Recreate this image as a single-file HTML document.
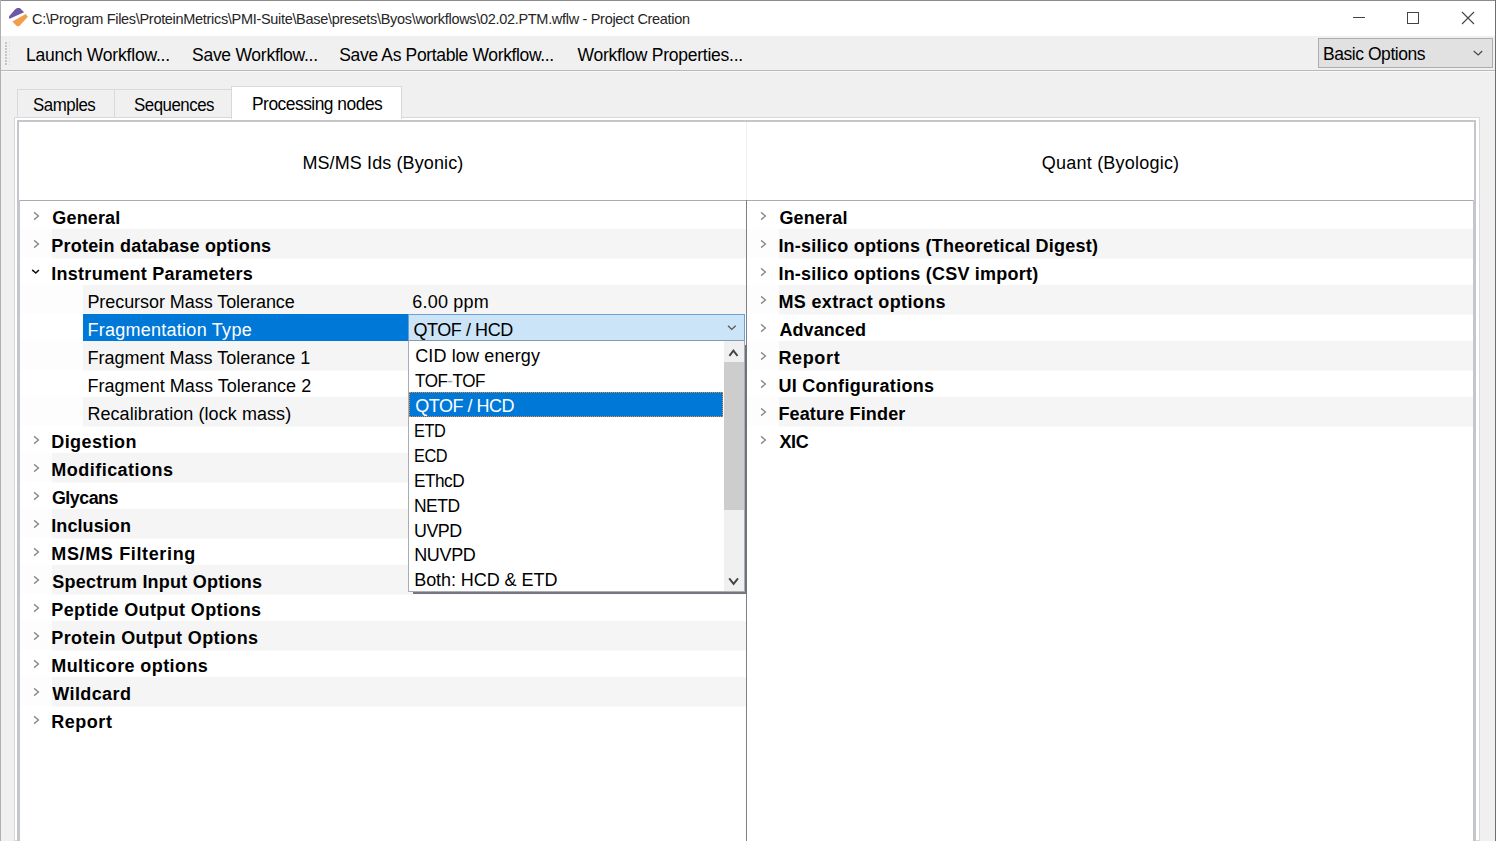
<!DOCTYPE html><html><head><meta charset="utf-8"><style>
html,body{margin:0;padding:0;}
body{width:1496px;height:841px;overflow:hidden;position:relative;background:#f0f0f0;font-family:"Liberation Sans", sans-serif;}
.a{position:absolute;}
.t{position:absolute;white-space:pre;line-height:1;}
</style></head><body>

<div class="a" style="left:0px;top:0px;width:1496px;height:1px;background:#8c8c8c"></div>
<div class="a" style="left:0px;top:0px;width:1px;height:841px;background:#b0b0b0"></div>
<div class="a" style="left:1495px;top:0px;width:1px;height:841px;background:#6e6e6e"></div>
<div class="a" style="left:1px;top:1px;width:1494px;height:35px;background:#fff"></div>
<svg class="a" style="left:0;top:0" width="36" height="36" viewBox="0 0 36 36">
<path d="M9.6 18.7 Q8.3 17.9 9.3 15.9 L15 9.6 Q16.2 8 17.6 8 L19.8 8 L24.1 12.3 Z" fill="#6f57a2"/>
<path d="M12.3 21.4 L25.7 13.9 L27.9 16.7 L19.4 26 Q18 26.8 16.4 25.8 Z" fill="#f0a04c"/>
</svg>
<div class="a" style="left:1353px;top:17px;width:12px;height:1px;background:#444"></div>
<div class="a" style="left:1407px;top:12px;width:10px;height:10px;border:1px solid #444"></div>
<svg class="a" style="left:1460px;top:10px" width="16" height="16" viewBox="0 0 16 16">
<path d="M2 2 L14 14 M14 2 L2 14" stroke="#444" stroke-width="1.1"/></svg>
<div class="a" style="left:1px;top:36px;width:1494px;height:34px;background:#f0f0f0"></div>
<div class="a" style="left:1px;top:70px;width:1494px;height:1px;background:#b9b9b9"></div>
<div class="a" style="left:1px;top:71px;width:1494px;height:1px;background:#f8f8f8"></div>
<div class="a" style="left:5px;top:41.5px;width:2px;height:2px;background:#c6c6c6"></div><div class="a" style="left:9px;top:42.0px;width:1px;height:1px;background:#d6d6d6"></div><div class="a" style="left:5px;top:44.6px;width:2px;height:2px;background:#c6c6c6"></div><div class="a" style="left:9px;top:45.1px;width:1px;height:1px;background:#d6d6d6"></div><div class="a" style="left:5px;top:47.7px;width:2px;height:2px;background:#c6c6c6"></div><div class="a" style="left:9px;top:48.2px;width:1px;height:1px;background:#d6d6d6"></div><div class="a" style="left:5px;top:50.8px;width:2px;height:2px;background:#c6c6c6"></div><div class="a" style="left:9px;top:51.3px;width:1px;height:1px;background:#d6d6d6"></div><div class="a" style="left:5px;top:53.9px;width:2px;height:2px;background:#c6c6c6"></div><div class="a" style="left:9px;top:54.4px;width:1px;height:1px;background:#d6d6d6"></div><div class="a" style="left:5px;top:57.0px;width:2px;height:2px;background:#c6c6c6"></div><div class="a" style="left:9px;top:57.5px;width:1px;height:1px;background:#d6d6d6"></div><div class="a" style="left:5px;top:60.1px;width:2px;height:2px;background:#c6c6c6"></div><div class="a" style="left:9px;top:60.6px;width:1px;height:1px;background:#d6d6d6"></div><div class="a" style="left:5px;top:63.2px;width:2px;height:2px;background:#c6c6c6"></div><div class="a" style="left:9px;top:63.7px;width:1px;height:1px;background:#d6d6d6"></div>
<div class="a" style="left:1318px;top:38px;width:173px;height:28px;background:#e1e1e1;border:1px solid #adadad"></div>
<svg class="a" style="left:1470px;top:47px" width="16" height="12" viewBox="0 0 16 12">
<path d="M3.7 4 L8.2 8 L12.2 4" stroke="#444" stroke-width="1.1" fill="none"/></svg>
<div class="a" style="left:17px;top:89px;width:98px;height:29px;background:#f0f0f0;border:1px solid #d9d9d9;border-bottom:none;box-sizing:border-box"></div>
<div class="a" style="left:115px;top:89px;width:117px;height:29px;background:#f0f0f0;border:1px solid #d9d9d9;border-left:none;border-bottom:none;box-sizing:border-box"></div>
<div class="a" style="left:14px;top:117px;width:1466px;height:724px;background:#fff;border:1px solid #d9d9d9;box-sizing:border-box"></div>
<div class="a" style="left:231px;top:86px;width:171px;height:33px;background:#fff;border:1px solid #d9d9d9;border-bottom:none;box-sizing:border-box"></div>
<div class="a" style="left:17px;top:120px;width:1459px;height:721px;background:#fff;border-left:2px solid #c3c7cc;border-top:2px solid #c3c7cc;border-right:2px solid #c3c7cc;box-sizing:border-box"></div>
<div class="a" style="left:746px;top:122px;width:1px;height:78px;background:#f0f0f0"></div>
<div class="a" style="left:19px;top:200px;width:1455px;height:1px;background:#a8acb2"></div>
<div class="a" style="left:18px;top:200px;width:2px;height:641px;background:#c3c7cc"></div>
<div class="a" style="left:746px;top:200px;width:1px;height:641px;background:#7d828a"></div>
<div class="a" style="left:1473px;top:200px;width:2px;height:641px;background:#c3c7cc"></div>
<div class="a" style="left:20px;top:229px;width:32px;height:29px;background:#fdfdfd"></div>
<div class="a" style="left:52px;top:229px;width:694px;height:29px;background:#f5f5f5"></div>
<div class="a" style="left:52px;top:258px;width:694px;height:1px;background:#fafafa"></div>
<div class="a" style="left:20px;top:285px;width:63px;height:29px;background:#fdfdfd"></div>
<div class="a" style="left:83px;top:285px;width:663px;height:29px;background:#f5f5f5"></div>
<div class="a" style="left:83px;top:314px;width:663px;height:1px;background:#fafafa"></div>
<div class="a" style="left:83px;top:314px;width:326px;height:28px;background:#0078d7"></div>
<div class="a" style="left:20px;top:341px;width:63px;height:29px;background:#fdfdfd"></div>
<div class="a" style="left:83px;top:341px;width:663px;height:29px;background:#f5f5f5"></div>
<div class="a" style="left:83px;top:370px;width:663px;height:1px;background:#fafafa"></div>
<div class="a" style="left:20px;top:397px;width:63px;height:29px;background:#fdfdfd"></div>
<div class="a" style="left:83px;top:397px;width:663px;height:29px;background:#f5f5f5"></div>
<div class="a" style="left:83px;top:426px;width:663px;height:1px;background:#fafafa"></div>
<div class="a" style="left:20px;top:453px;width:32px;height:29px;background:#fdfdfd"></div>
<div class="a" style="left:52px;top:453px;width:694px;height:29px;background:#f5f5f5"></div>
<div class="a" style="left:52px;top:482px;width:694px;height:1px;background:#fafafa"></div>
<div class="a" style="left:20px;top:509px;width:32px;height:29px;background:#fdfdfd"></div>
<div class="a" style="left:52px;top:509px;width:694px;height:29px;background:#f5f5f5"></div>
<div class="a" style="left:52px;top:538px;width:694px;height:1px;background:#fafafa"></div>
<div class="a" style="left:20px;top:565px;width:32px;height:29px;background:#fdfdfd"></div>
<div class="a" style="left:52px;top:565px;width:694px;height:29px;background:#f5f5f5"></div>
<div class="a" style="left:52px;top:594px;width:694px;height:1px;background:#fafafa"></div>
<div class="a" style="left:20px;top:621px;width:32px;height:29px;background:#fdfdfd"></div>
<div class="a" style="left:52px;top:621px;width:694px;height:29px;background:#f5f5f5"></div>
<div class="a" style="left:52px;top:650px;width:694px;height:1px;background:#fafafa"></div>
<div class="a" style="left:20px;top:677px;width:32px;height:29px;background:#fdfdfd"></div>
<div class="a" style="left:52px;top:677px;width:694px;height:29px;background:#f5f5f5"></div>
<div class="a" style="left:52px;top:706px;width:694px;height:1px;background:#fafafa"></div>
<div class="a" style="left:747px;top:229px;width:32px;height:29px;background:#fdfdfd"></div>
<div class="a" style="left:779px;top:229px;width:694px;height:29px;background:#f5f5f5"></div>
<div class="a" style="left:779px;top:258px;width:694px;height:1px;background:#fafafa"></div>
<div class="a" style="left:747px;top:285px;width:32px;height:29px;background:#fdfdfd"></div>
<div class="a" style="left:779px;top:285px;width:694px;height:29px;background:#f5f5f5"></div>
<div class="a" style="left:779px;top:314px;width:694px;height:1px;background:#fafafa"></div>
<div class="a" style="left:747px;top:341px;width:32px;height:29px;background:#fdfdfd"></div>
<div class="a" style="left:779px;top:341px;width:694px;height:29px;background:#f5f5f5"></div>
<div class="a" style="left:779px;top:370px;width:694px;height:1px;background:#fafafa"></div>
<div class="a" style="left:747px;top:397px;width:32px;height:29px;background:#fdfdfd"></div>
<div class="a" style="left:779px;top:397px;width:694px;height:29px;background:#f5f5f5"></div>
<div class="a" style="left:779px;top:426px;width:694px;height:1px;background:#fafafa"></div>
<svg class="a" style="left:30px;top:208px" width="16" height="16" viewBox="0 0 16 16"><path d="M4.1 4.4 L8.4 8 L4.1 11.6" stroke="#8a8a8a" stroke-width="1.4" fill="none"/></svg>
<svg class="a" style="left:30px;top:236px" width="16" height="16" viewBox="0 0 16 16"><path d="M4.1 4.4 L8.4 8 L4.1 11.6" stroke="#8a8a8a" stroke-width="1.4" fill="none"/></svg>
<svg class="a" style="left:28px;top:263px" width="16" height="16" viewBox="0 0 16 16"><path d="M4.2 6.9 L7.8 10 L10.9 7" stroke="#111" stroke-width="1.6" fill="none"/></svg>
<svg class="a" style="left:30px;top:432px" width="16" height="16" viewBox="0 0 16 16"><path d="M4.1 4.4 L8.4 8 L4.1 11.6" stroke="#8a8a8a" stroke-width="1.4" fill="none"/></svg>
<svg class="a" style="left:30px;top:460px" width="16" height="16" viewBox="0 0 16 16"><path d="M4.1 4.4 L8.4 8 L4.1 11.6" stroke="#8a8a8a" stroke-width="1.4" fill="none"/></svg>
<svg class="a" style="left:30px;top:488px" width="16" height="16" viewBox="0 0 16 16"><path d="M4.1 4.4 L8.4 8 L4.1 11.6" stroke="#8a8a8a" stroke-width="1.4" fill="none"/></svg>
<svg class="a" style="left:30px;top:516px" width="16" height="16" viewBox="0 0 16 16"><path d="M4.1 4.4 L8.4 8 L4.1 11.6" stroke="#8a8a8a" stroke-width="1.4" fill="none"/></svg>
<svg class="a" style="left:30px;top:544px" width="16" height="16" viewBox="0 0 16 16"><path d="M4.1 4.4 L8.4 8 L4.1 11.6" stroke="#8a8a8a" stroke-width="1.4" fill="none"/></svg>
<svg class="a" style="left:30px;top:572px" width="16" height="16" viewBox="0 0 16 16"><path d="M4.1 4.4 L8.4 8 L4.1 11.6" stroke="#8a8a8a" stroke-width="1.4" fill="none"/></svg>
<svg class="a" style="left:30px;top:600px" width="16" height="16" viewBox="0 0 16 16"><path d="M4.1 4.4 L8.4 8 L4.1 11.6" stroke="#8a8a8a" stroke-width="1.4" fill="none"/></svg>
<svg class="a" style="left:30px;top:628px" width="16" height="16" viewBox="0 0 16 16"><path d="M4.1 4.4 L8.4 8 L4.1 11.6" stroke="#8a8a8a" stroke-width="1.4" fill="none"/></svg>
<svg class="a" style="left:30px;top:656px" width="16" height="16" viewBox="0 0 16 16"><path d="M4.1 4.4 L8.4 8 L4.1 11.6" stroke="#8a8a8a" stroke-width="1.4" fill="none"/></svg>
<svg class="a" style="left:30px;top:684px" width="16" height="16" viewBox="0 0 16 16"><path d="M4.1 4.4 L8.4 8 L4.1 11.6" stroke="#8a8a8a" stroke-width="1.4" fill="none"/></svg>
<svg class="a" style="left:30px;top:712px" width="16" height="16" viewBox="0 0 16 16"><path d="M4.1 4.4 L8.4 8 L4.1 11.6" stroke="#8a8a8a" stroke-width="1.4" fill="none"/></svg>
<svg class="a" style="left:757px;top:208px" width="16" height="16" viewBox="0 0 16 16"><path d="M4.1 4.4 L8.4 8 L4.1 11.6" stroke="#8a8a8a" stroke-width="1.4" fill="none"/></svg>
<svg class="a" style="left:757px;top:236px" width="16" height="16" viewBox="0 0 16 16"><path d="M4.1 4.4 L8.4 8 L4.1 11.6" stroke="#8a8a8a" stroke-width="1.4" fill="none"/></svg>
<svg class="a" style="left:757px;top:264px" width="16" height="16" viewBox="0 0 16 16"><path d="M4.1 4.4 L8.4 8 L4.1 11.6" stroke="#8a8a8a" stroke-width="1.4" fill="none"/></svg>
<svg class="a" style="left:757px;top:292px" width="16" height="16" viewBox="0 0 16 16"><path d="M4.1 4.4 L8.4 8 L4.1 11.6" stroke="#8a8a8a" stroke-width="1.4" fill="none"/></svg>
<svg class="a" style="left:757px;top:320px" width="16" height="16" viewBox="0 0 16 16"><path d="M4.1 4.4 L8.4 8 L4.1 11.6" stroke="#8a8a8a" stroke-width="1.4" fill="none"/></svg>
<svg class="a" style="left:757px;top:348px" width="16" height="16" viewBox="0 0 16 16"><path d="M4.1 4.4 L8.4 8 L4.1 11.6" stroke="#8a8a8a" stroke-width="1.4" fill="none"/></svg>
<svg class="a" style="left:757px;top:376px" width="16" height="16" viewBox="0 0 16 16"><path d="M4.1 4.4 L8.4 8 L4.1 11.6" stroke="#8a8a8a" stroke-width="1.4" fill="none"/></svg>
<svg class="a" style="left:757px;top:404px" width="16" height="16" viewBox="0 0 16 16"><path d="M4.1 4.4 L8.4 8 L4.1 11.6" stroke="#8a8a8a" stroke-width="1.4" fill="none"/></svg>
<svg class="a" style="left:757px;top:432px" width="16" height="16" viewBox="0 0 16 16"><path d="M4.1 4.4 L8.4 8 L4.1 11.6" stroke="#8a8a8a" stroke-width="1.4" fill="none"/></svg>
<div class="a" style="left:408px;top:314px;width:337px;height:27px;background:#cce4f7;border:1px solid #6d9fd1;border-bottom-color:#8d99a6;box-sizing:border-box"></div>
<svg class="a" style="left:724px;top:319px" width="16" height="16" viewBox="0 0 16 16">
<path d="M4 6.7 L7.7 10.4 L11.7 6.7" stroke="#555" stroke-width="1.3" fill="none"/></svg>
<div class="a" style="left:408px;top:341px;width:337px;height:251px;background:#fff;border-left:1px solid #a9adb3;border-right:1px solid #a9adb3;border-bottom:1px solid #a9adb3;box-sizing:border-box"></div>
<div class="a" style="left:745px;top:345px;width:2px;height:249px;background:#6f737a"></div>
<div class="a" style="left:413px;top:592px;width:334px;height:2px;background:#74787e"></div>
<div class="a" style="left:409px;top:392px;width:314px;height:25px;background:#0078d7;outline:1px dotted #f08a2a;outline-offset:-1px"></div>
<div class="a" style="left:724px;top:341px;width:20px;height:250px;background:#f0f0f0"></div>
<div class="a" style="left:724px;top:362px;width:20px;height:148px;background:#cdcdcd"></div>
<svg class="a" style="left:725px;top:344px" width="16" height="16" viewBox="0 0 16 16">
<path d="M4.4 11.8 L8.4 6.6 L12.5 11.8" stroke="#444" stroke-width="1.9" fill="none"/></svg>
<svg class="a" style="left:725px;top:573px" width="16" height="16" viewBox="0 0 16 16">
<path d="M4.2 5.4 L8.6 10.9 L13 5.4" stroke="#444" stroke-width="1.9" fill="none"/></svg>
<div class="t" style="left:32.00px;top:11.93px;font-size:14.5px;font-weight:400;color:#262626;letter-spacing:-0.311px">C:\Program Files\ProteinMetrics\PMI-Suite\Base\presets\Byos\workflows\02.02.PTM.wflw - Project Creation</div>
<div class="t" style="left:26.00px;top:47.49px;font-size:17.5px;font-weight:400;color:#000;letter-spacing:-0.204px">Launch Workflow...</div>
<div class="t" style="left:192.00px;top:47.49px;font-size:17.5px;font-weight:400;color:#000;letter-spacing:-0.263px">Save Workflow...</div>
<div class="t" style="left:339.30px;top:47.49px;font-size:17.5px;font-weight:400;color:#000;letter-spacing:-0.351px">Save As Portable Workflow...</div>
<div class="t" style="left:577.60px;top:47.49px;font-size:17.5px;font-weight:400;color:#000;letter-spacing:-0.251px">Workflow Properties...</div>
<div class="t" style="left:1323.00px;top:46.19px;font-size:17.5px;font-weight:400;color:#000;letter-spacing:-0.451px">Basic Options</div>
<div class="t" style="left:33.20px;top:96.99px;font-size:17.5px;font-weight:400;color:#000;letter-spacing:-0.500px;transform:scaleX(0.9642);transform-origin:0 0">Samples</div>
<div class="t" style="left:134.30px;top:96.99px;font-size:17.5px;font-weight:400;color:#000;letter-spacing:-0.500px;transform:scaleX(0.9628);transform-origin:0 0">Sequences</div>
<div class="t" style="left:252.20px;top:95.59px;font-size:17.5px;font-weight:400;color:#000;letter-spacing:-0.500px;transform:scaleX(0.9934);transform-origin:0 0">Processing nodes</div>
<div class="t" style="left:302.40px;top:154.16px;font-size:18px;font-weight:400;color:#000;letter-spacing:0.110px">MS/MS Ids (Byonic)</div>
<div class="t" style="left:1041.80px;top:154.06px;font-size:18px;font-weight:400;color:#000;letter-spacing:0.216px">Quant (Byologic)</div>
<div class="t" style="left:52.30px;top:208.96px;font-size:18px;font-weight:700;color:#000;letter-spacing:0.161px">General</div>
<div class="t" style="left:51.30px;top:236.96px;font-size:18px;font-weight:700;color:#000;letter-spacing:0.208px">Protein database options</div>
<div class="t" style="left:51.30px;top:264.96px;font-size:18px;font-weight:700;color:#000;letter-spacing:0.267px">Instrument Parameters</div>
<div class="t" style="left:87.40px;top:292.96px;font-size:18px;font-weight:400;color:#000;letter-spacing:-0.059px">Precursor Mass Tolerance</div>
<div class="t" style="left:87.40px;top:320.96px;font-size:18px;font-weight:400;color:#fff;letter-spacing:0.266px">Fragmentation Type</div>
<div class="t" style="left:87.40px;top:348.96px;font-size:18px;font-weight:400;color:#000;letter-spacing:0.009px">Fragment Mass Tolerance 1</div>
<div class="t" style="left:87.40px;top:376.96px;font-size:18px;font-weight:400;color:#000;letter-spacing:0.042px">Fragment Mass Tolerance 2</div>
<div class="t" style="left:87.40px;top:404.96px;font-size:18px;font-weight:400;color:#000;letter-spacing:0.072px">Recalibration (lock mass)</div>
<div class="t" style="left:51.30px;top:432.96px;font-size:18px;font-weight:700;color:#000;letter-spacing:0.399px">Digestion</div>
<div class="t" style="left:51.30px;top:460.96px;font-size:18px;font-weight:700;color:#000;letter-spacing:0.476px">Modifications</div>
<div class="t" style="left:52.30px;top:488.96px;font-size:18px;font-weight:700;color:#000;letter-spacing:-0.500px;transform:scaleX(0.9906);transform-origin:0 0">Glycans</div>
<div class="t" style="left:51.30px;top:516.96px;font-size:18px;font-weight:700;color:#000;letter-spacing:0.074px">Inclusion</div>
<div class="t" style="left:51.30px;top:544.96px;font-size:18px;font-weight:700;color:#000;letter-spacing:0.643px">MS/MS Filtering</div>
<div class="t" style="left:52.30px;top:572.96px;font-size:18px;font-weight:700;color:#000;letter-spacing:0.229px">Spectrum Input Options</div>
<div class="t" style="left:51.30px;top:600.96px;font-size:18px;font-weight:700;color:#000;letter-spacing:0.368px">Peptide Output Options</div>
<div class="t" style="left:51.30px;top:628.96px;font-size:18px;font-weight:700;color:#000;letter-spacing:0.368px">Protein Output Options</div>
<div class="t" style="left:51.30px;top:656.96px;font-size:18px;font-weight:700;color:#000;letter-spacing:0.407px">Multicore options</div>
<div class="t" style="left:52.30px;top:684.96px;font-size:18px;font-weight:700;color:#000;letter-spacing:0.392px">Wildcard</div>
<div class="t" style="left:51.30px;top:712.96px;font-size:18px;font-weight:700;color:#000;letter-spacing:0.519px">Report</div>
<div class="t" style="left:779.40px;top:208.96px;font-size:18px;font-weight:700;color:#000;letter-spacing:0.178px">General</div>
<div class="t" style="left:778.40px;top:236.96px;font-size:18px;font-weight:700;color:#000;letter-spacing:0.232px">In-silico options (Theoretical Digest)</div>
<div class="t" style="left:778.40px;top:264.96px;font-size:18px;font-weight:700;color:#000;letter-spacing:0.238px">In-silico options (CSV import)</div>
<div class="t" style="left:778.40px;top:292.96px;font-size:18px;font-weight:700;color:#000;letter-spacing:0.358px">MS extract options</div>
<div class="t" style="left:779.40px;top:320.96px;font-size:18px;font-weight:700;color:#000;letter-spacing:0.081px">Advanced</div>
<div class="t" style="left:778.40px;top:348.96px;font-size:18px;font-weight:700;color:#000;letter-spacing:0.659px">Report</div>
<div class="t" style="left:778.40px;top:376.96px;font-size:18px;font-weight:700;color:#000;letter-spacing:0.289px">UI Configurations</div>
<div class="t" style="left:778.40px;top:404.96px;font-size:18px;font-weight:700;color:#000;letter-spacing:0.145px">Feature Finder</div>
<div class="t" style="left:779.40px;top:432.96px;font-size:18px;font-weight:700;color:#000;letter-spacing:-0.303px">XIC</div>
<div class="t" style="left:412.30px;top:293.06px;font-size:18px;font-weight:400;color:#000;letter-spacing:0.206px">6.00 ppm</div>
<div class="t" style="left:413.50px;top:320.76px;font-size:18px;font-weight:400;color:#000;letter-spacing:-0.441px">QTOF / HCD</div>
<div class="t" style="left:415.20px;top:347.36px;font-size:18px;font-weight:400;color:#000;letter-spacing:0.135px">CID low energy</div>
<div class="t" style="left:415.20px;top:372.24px;font-size:18px;font-weight:400;color:#000;letter-spacing:-0.500px;transform:scaleX(0.9471);transform-origin:0 0">TOF<span style="color:#a0a0a0">-</span>TOF</div>
<div class="t" style="left:415.20px;top:397.12px;font-size:18px;font-weight:400;color:#fff;letter-spacing:-0.474px">QTOF / HCD</div>
<div class="t" style="left:414.20px;top:422.00px;font-size:18px;font-weight:400;color:#000;letter-spacing:-0.500px;transform:scaleX(0.9059);transform-origin:0 0">ETD</div>
<div class="t" style="left:414.20px;top:446.88px;font-size:18px;font-weight:400;color:#000;letter-spacing:-0.500px;transform:scaleX(0.9054);transform-origin:0 0">ECD</div>
<div class="t" style="left:414.20px;top:471.76px;font-size:18px;font-weight:400;color:#000;letter-spacing:-0.500px;transform:scaleX(0.9556);transform-origin:0 0">EThcD</div>
<div class="t" style="left:414.20px;top:496.64px;font-size:18px;font-weight:400;color:#000;letter-spacing:-0.500px;transform:scaleX(0.9677);transform-origin:0 0">NETD</div>
<div class="t" style="left:414.20px;top:521.52px;font-size:18px;font-weight:400;color:#000;letter-spacing:-0.500px;transform:scaleX(0.9914);transform-origin:0 0">UVPD</div>
<div class="t" style="left:414.20px;top:546.40px;font-size:18px;font-weight:400;color:#000;letter-spacing:-0.352px">NUVPD</div>
<div class="t" style="left:414.20px;top:571.28px;font-size:18px;font-weight:400;color:#000;letter-spacing:-0.060px">Both: HCD &amp; ETD</div>
</body></html>
